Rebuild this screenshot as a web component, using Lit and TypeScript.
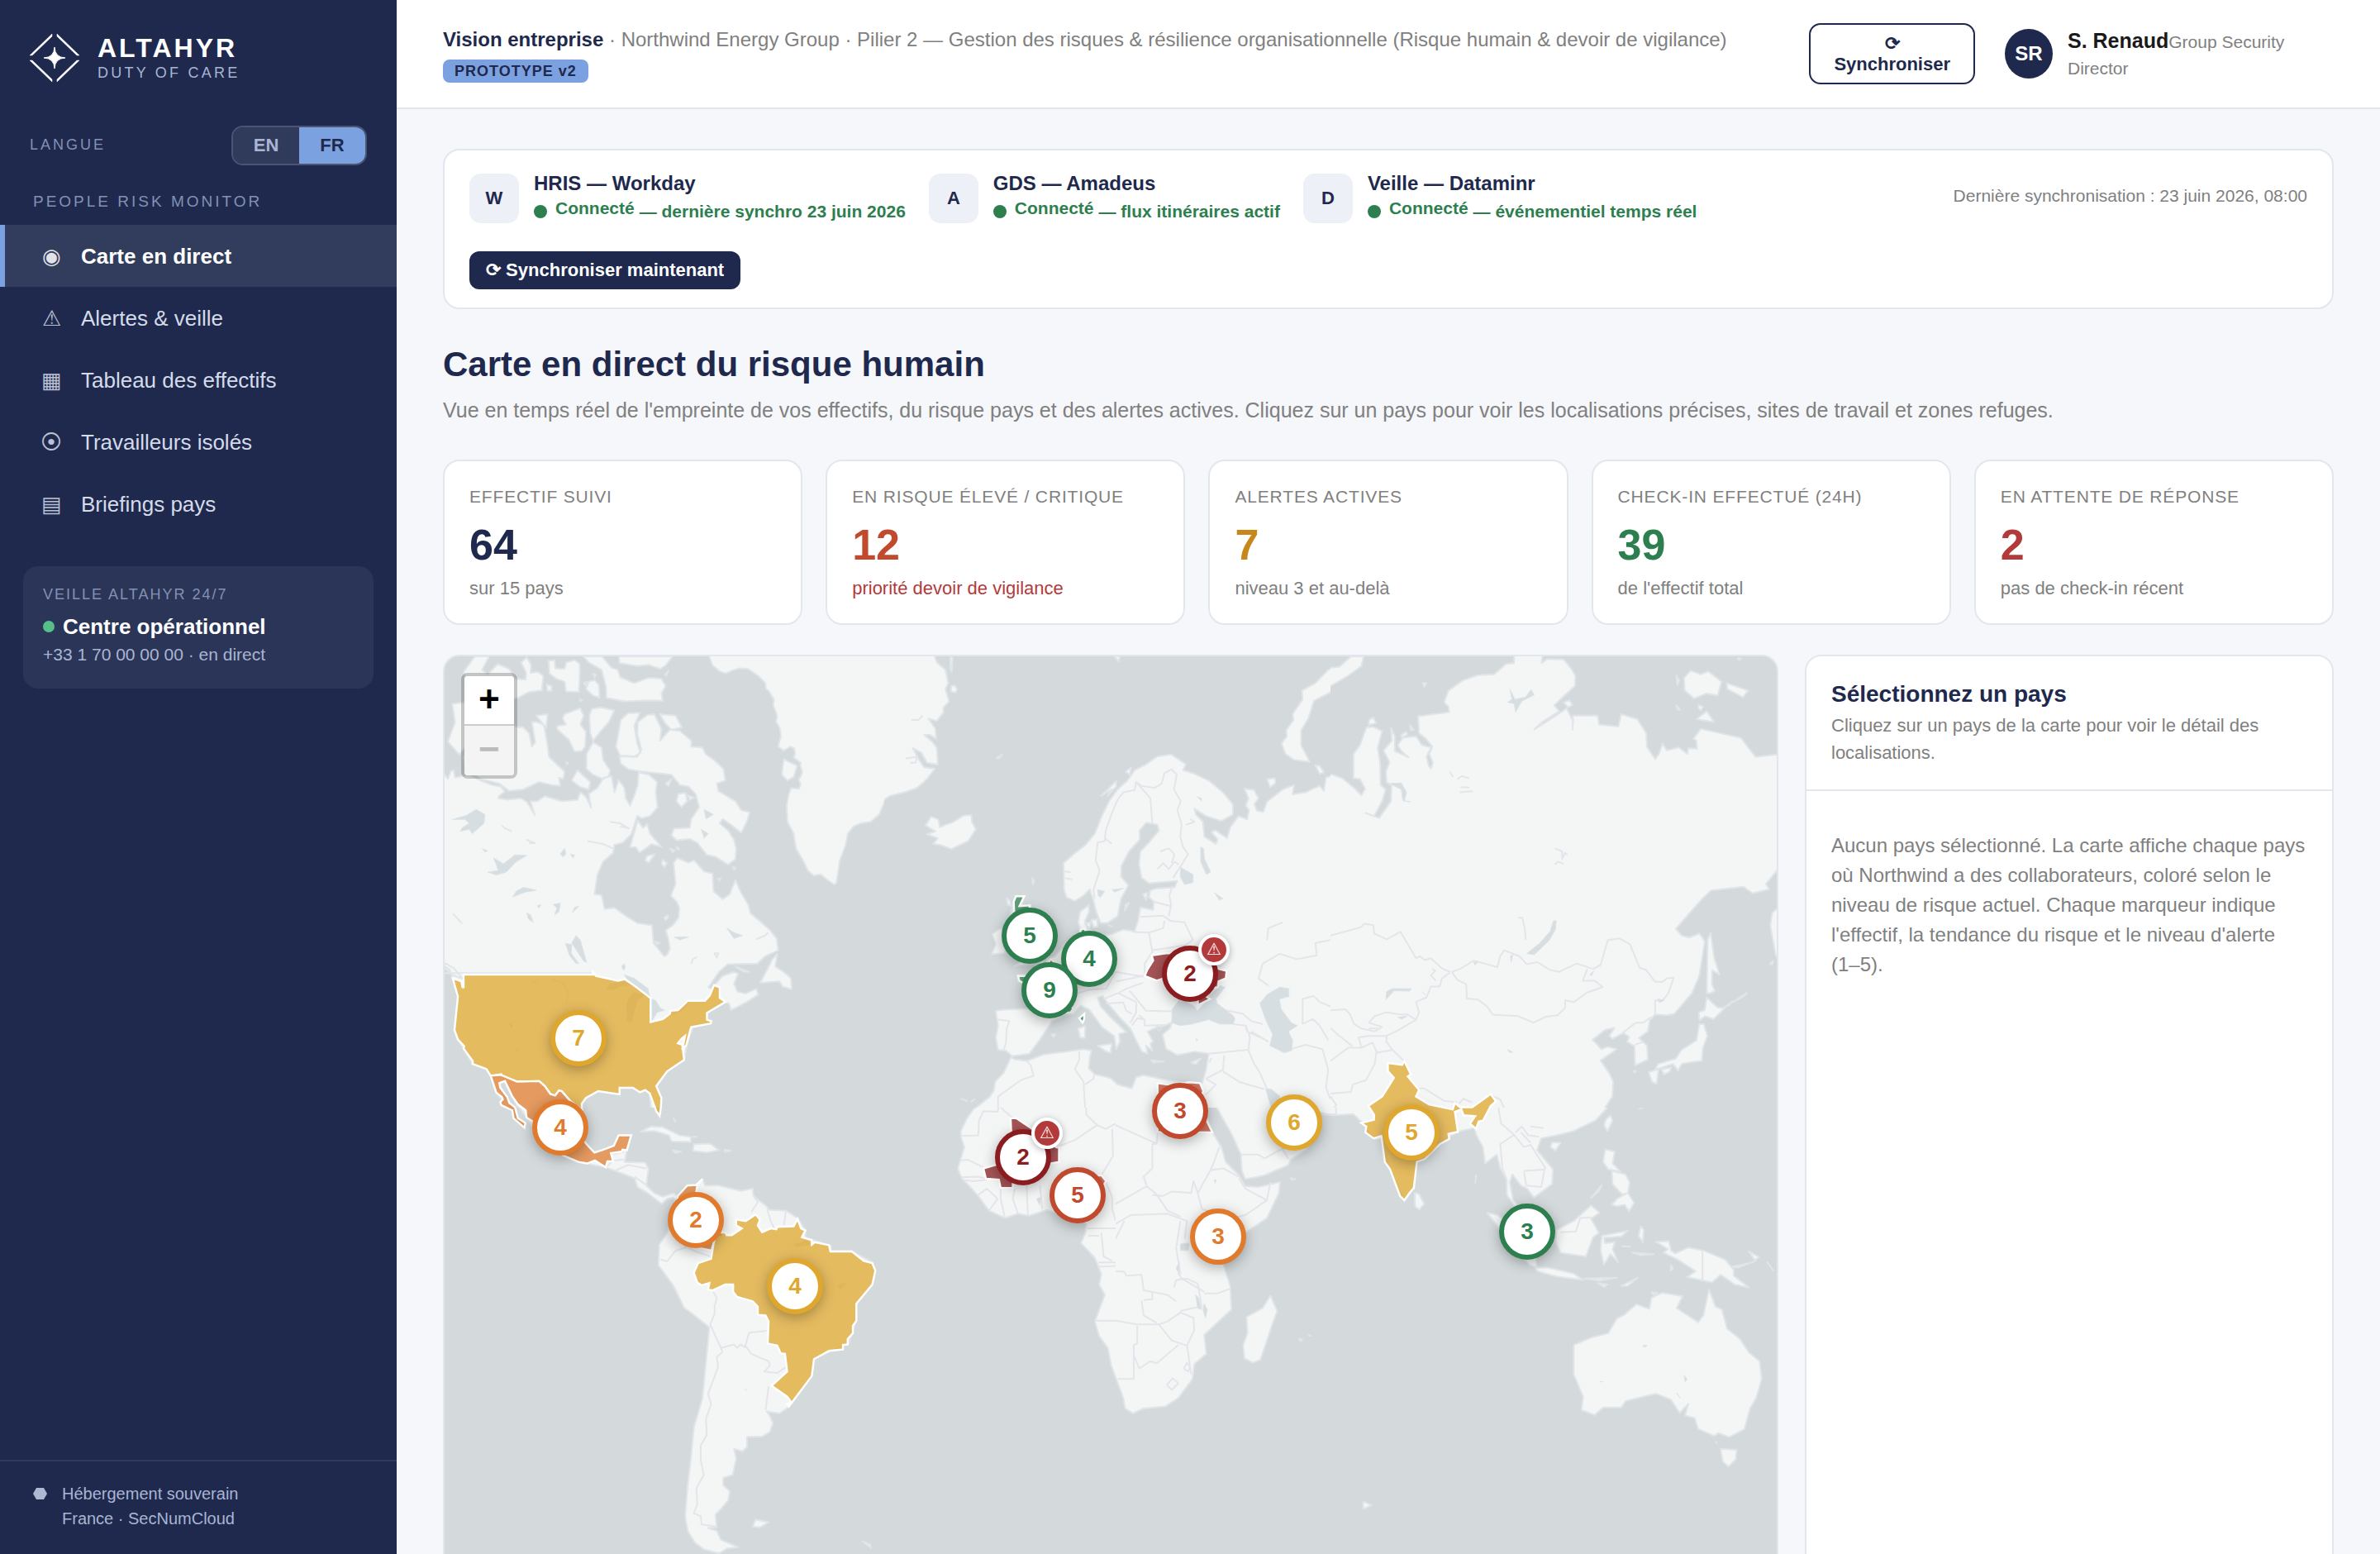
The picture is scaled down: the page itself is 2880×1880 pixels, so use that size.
import { LitElement, html, svg, css } from "lit";
import { customElement, state } from "lit/decorators.js";
import { classMap } from "lit/directives/class-map.js";
import { styleMap } from "lit/directives/style-map.js";

/* ------------------------------------------------------------------ */
/* Map data                                                            */
/* ------------------------------------------------------------------ */

/** Every tile is described on a square grid of this many units. */
const UNITS = 1568;

interface Tile {
  x: number;
  y: number;
  w: number;
  h: number;
  /** First grid row that is painted. */
  from: number;
  land: string[];
  water: string[];
  borders: string[];
}

const TILES: Tile[] = [
  {
    x: 530, y: 780, w: 540, h: 560, from: 0,
    land: [
      // Greenland, west
      "945,20 965,70 990,90 1010,97 1040,85 1060,80 1090,82 1125,105 1150,130 1152,148 1165,160 1180,185 1178,205 1192,240 1188,260 1202,285 1205,310 1195,345 1215,358 1240,345 1252,352 1255,370 1250,382 1275,400 1273,410 1280,430 1275,445 1268,455 1274,475 1268,488 1240,486 1232,510 1225,545 1228,600 1250,640 1258,690 1285,735 1300,765 1320,782 1345,778 1370,798 1392,812 1400,806 1405,775 1412,730 1432,680 1440,640 1460,615 1485,605 1520,600 1550,575 1570,530 1610,500 1610,20",
      "1215,388 1262,410 1250,448 1228,460 1208,440",
      // Canadian mainland and United States
      "-20,430 23,440 35,455 45,428 55,425 60,450 85,445 110,440 150,460 190,475 220,480 235,497 215,512 212,520 245,525 290,520 312,532 340,577 325,530 350,530 375,513 400,520 435,530 490,526 500,500 520,515 538,552 530,505 560,485 582,450 610,445 620,500 635,458 655,485 660,520 675,545 690,510 702,475 705,433 742,440 770,465 765,500 772,550 745,580 715,588 700,580 690,610 680,640 650,670 620,678 615,705 580,735 560,780 550,845 575,848 585,895 620,891 660,918 700,943 752,950 757,1010 795,1055 805,1050 815,1030 808,990 800,968 825,950 845,925 848,890 838,870 818,850 835,810 828,740 840,722 880,738 900,730 935,768 965,775 968,835 1000,862 1025,845 1045,797 1065,840 1090,880 1098,910 1130,935 1165,965 1190,995 1195,1035 1150,1055 1122,1080 1018,1082 990,1105 950,1160 960,1165 1000,1122 1040,1108 1055,1115 1040,1148 1052,1175 1080,1182 1118,1165 1126,1185 1085,1210 1030,1238 1022,1215 1008,1210 945,1247 945,1270 958,1280 895,1297 877,1345 865,1406 805,1445 767,1495 783,1535 779,1596 750,1600 744,1520 728,1508 710,1516 685,1501 638,1501 638,1523 563,1512 520,1535 505,1555 505,1620 310,1620 262,1530 235,1478 215,1485 250,1568 240,1620 228,1545 205,1517 185,1460 170,1437 122,1420 90,1368 70,1337 58,1305 70,1192 52,1130 40,1100 -20,1060",
      // Arctic archipelago
      "90,92 130,39 180,39 155,85 175,100 210,65 250,82 272,115 308,118 310,95 292,60 312,42 328,70 325,95 350,92 370,105 365,155 320,160 280,180 200,200 150,160 100,130",
      "50,200 130,190 150,240 110,330 75,372 35,328 60,262",
      "285,280 298,278 320,300 330,345 342,330 330,262 350,262 372,272 385,340 390,380 445,430 440,455 425,450 430,478 400,475 355,465 300,490 250,495 215,470 150,455 100,420 90,380 130,330 180,270 240,265",
      "388,55 410,52 412,80 445,82 450,60 480,52 498,65 498,110 495,160 450,158 445,125 415,115 392,98",
      "530,125 550,120 565,135 568,180 545,172 520,150",
      "510,39 575,39 610,78 632,85 640,110 690,130 740,112 785,115 800,140 785,165 790,190 740,188 655,192 592,180 590,140 575,85 530,60",
      "635,39 825,39 800,70 780,82 740,68 700,72 638,62",
      "445,235 500,215 512,240 500,270 520,295 517,345 505,360 480,362 460,322 418,285 420,275 450,270 438,250",
      "540,218 570,212 620,222 600,262 570,295 545,325 535,300 532,240",
      "345,240 385,235 380,282 362,260",
      "545,330 575,348 580,390 605,425 600,445 580,455 545,440 522,420 522,370",
      "490,425 535,465 530,490 500,482 470,460",
      "632,310 642,255 668,232 710,230 690,275 700,335 712,365 690,378 640,375 625,345",
      "702,262 735,238 760,235 785,285 780,325 815,288 850,292 890,325 890,345 930,348 940,370 975,395 1003,420 1010,460 980,470 985,495 1045,530 1065,560 1095,568 1085,600 1065,637 1030,610 1000,590 990,605 1020,630 1040,660 1048,690 1045,725 1020,745 975,718 945,712 912,672 885,658 838,662 820,645 830,622 885,620 890,590 918,550 905,505 880,480 850,475 820,440 790,437 720,430 670,422 642,402 638,378 700,380 715,355 700,300",
      "780,235 835,240 857,280 820,288 795,262",
      "845,505 870,502 876,530 855,550 838,530",
      "702,595 720,620 735,608 745,640 785,685 750,675 708,705 695,685 675,685",
      "735,715 762,710 740,738 728,730", "790,728 804,740 795,753 786,742",
      "1192,1048 1185,1090 1215,1108 1240,1130 1243,1167 1210,1158 1200,1140 1132,1145 1160,1095 1175,1065",
      "1045,1090 1092,1108 1070,1106", "23,1078 55,1095 88,1132 50,1118 23,1095", "795,925 808,915 808,925 800,933", "762,1005 780,1010 770,1015", "985,792 993,792 988,800", "1036,752 1046,757 1040,762",
      "815,690 832,696 825,703", "838,685 848,690 842,695", "878,510 900,518 885,525", "800,470 820,455 810,478", "498,185 506,188 500,192", "810,88 802,105 798,100", "545,98 554,102 550,112", "512,130 524,125 518,138", "382,135 400,140 398,157 384,155", "450,398 458,400 454,405",
    ],
    water: [
      "50,592 100,578 135,558 165,575 162,605 120,640 110,625 78,632 85,620 110,605 95,592", "175,770 212,765 205,745 195,722 230,742 270,712 312,714 275,735 240,770 205,780", "262,855 275,835 300,822 330,828 345,832 305,838", "485,985 500,1000 522,1075 512,1072 490,1040 470,1010", "448,1012 470,1015 468,1045 495,1080 485,1080 462,1052",
      "592,1167 605,1148 650,1140 685,1150 640,1158 612,1170", "688,1178 728,1185 700,1205 685,1255 680,1278 665,1275 664,1215 675,1190", "750,1200 765,1205 780,1230 797,1238 770,1245 750,1278", "655,1118 690,1130 738,1165 745,1195 705,1165 665,1135", "645,1090 655,1080 658,1095 652,1102", "935,558 968,575 942,590", "925,625 950,640 935,655", "430,708 445,690 450,710 438,718", "405,880 430,875 425,905 410,915 418,892", "155,690 175,698 165,702", "312,908 325,915 335,940 318,930", "830,990 880,990 850,1000", "1015,960 1040,975 1070,985 1040,995", "465,710 480,712 475,722", "348,885 362,880 355,892", "480,890 495,885 472,908", "248,1282 262,1290 258,1297", "815,1255 860,1232 880,1210 870,1230 845,1245",
    ],
    borders: ["20,1112 540,1112", "225,612 235,622 260,632", "605,600 640,605 670,622 640,615", "525,665 580,675 615,690", "310,660 340,672 320,672", "890,1080 895,1065 910,1058", "970,1045 985,1045 980,1060 970,1045", "1118,998 1150,985 1160,975", "52,910 85,945", "330,1145 350,1136", "400,1135 440,1145 455,1175 452,1215", "268,1380 285,1368"],
  },
  {
    x: 1070, y: 780, w: 540, h: 560, from: 0,
    land: [
      // Greenland, east
      "-40,20 170,20 185,60 215,85 225,130 215,150 228,192 208,212 208,230 185,258 155,250 180,285 182,318 160,305 140,305 170,330 185,350 188,405 150,400 130,365 100,350 122,390 140,415 178,420 150,455 115,485 70,500 20,512 0,525 -40,560",
      "232,40 240,45 237,92 232,80", "235,140 247,137 257,150 250,162 235,158", "395,384 414,372 404,385", "808,39 827,39 824,56",
      "145,612 165,582 190,592 195,618 220,608 240,602 260,590 280,578 307,577 308,600 322,625 295,665 235,692 205,680 172,675 188,655 150,642 180,632",
      // Eurasia and North Africa
      "630,740 665,710 705,680 740,640 765,580 790,530 820,490 855,460 880,425 920,405 960,378 1010,372 1060,405 1050,425 1090,437 1140,460 1190,500 1225,540 1225,575 1185,597 1130,580 1090,555 1095,575 1120,600 1125,650 1165,675 1172,660 1150,635 1162,628 1205,655 1215,620 1245,580 1275,592 1282,560 1270,545 1280,520 1265,487 1300,492 1315,520 1300,540 1310,562 1332,566 1345,532 1400,490 1440,475 1435,507 1480,500 1530,478 1545,495 1552,450 1620,430 1620,1620 300,1620 320,1570 370,1532 385,1510 390,1480 420,1450 445,1398 460,1405 500,1410 560,1388 640,1378 700,1370 728,1375 722,1400 718,1435 740,1455 795,1468 820,1490 870,1503 885,1465 910,1458 980,1472 1060,1485 1118,1485 1132,1435 1140,1385 1090,1378 1030,1390 990,1368 978,1320 1005,1298 1010,1280 985,1290 948,1300 925,1310 945,1345 935,1350 942,1375 920,1358 925,1385 905,1378 880,1330 865,1300 830,1265 790,1220 768,1190 750,1195 760,1225 795,1262 850,1312 825,1318 828,1345 815,1370 808,1325 765,1295 720,1235 690,1222 665,1250 635,1255 590,1275 545,1340 510,1385 450,1394 428,1375 400,1372 392,1330 400,1290 392,1240 420,1236 515,1232 522,1200 500,1150 470,1140 470,1120 510,1115 540,1075 570,1065 600,1055 630,1020 650,1000 692,975 682,940 688,905 718,882 720,905 705,935 715,962 770,985 800,980 840,965 880,970 892,935 900,890 945,898 948,870 930,855 935,832 960,825 1020,822 1030,800 930,808 905,790 895,745 900,700 930,670 965,630 960,610 920,603 897,630 898,660 860,700 833,750 832,785 858,815 832,860 820,920 785,942 760,942 745,905 735,865 722,828 700,850 670,868 640,855 632,830",
      "1620,60 1560,85 1515,130 1468,155 1470,185 1435,235 1438,255 1412,290 1415,310 1396,335 1410,370 1440,390 1495,397 1465,340 1465,290 1490,250 1510,190 1570,160 1620,130",
      "1345,455 1372,452 1375,468 1356,483", "1515,408 1530,410 1545,432 1530,438",
      "455,870 463,852 492,852 480,885 512,885 540,950 575,1000 595,1030 575,1060 560,1080 458,1088 485,1070 440,1040 430,960", "380,980 400,965 425,960 425,1045 378,1048 392,1015",
      "750,1358 800,1352 795,1382 780,1378", "682,1300 706,1292 705,1332 688,1330", "938,1408 982,1412 945,1415", "1078,1415 1112,1402 1095,1421", "705,945 725,940 722,962", "728,932 748,930 750,955 735,958", "848,880 860,875 845,900", "910,845 925,840 920,865", "588,1320 602,1320 595,1328", "790,950 800,955", "762,512 815,462 815,480 785,512 800,490", "848,430 868,415 862,440", "430,860 440,865 445,885 435,880", "520,790 527,800 522,812", "270,1538 290,1545", "305,1548 318,1540",
    ],
    water: [
      "1012,1235 1035,1205 1060,1208 1090,1225 1100,1240 1130,1210 1140,1190 1165,1200 1170,1215 1225,1255 1232,1268 1225,1285 1180,1285 1140,1270 1080,1285 1040,1290 1010,1280", "1140,1190 1180,1155 1198,1160 1165,1200",
      "1320,1215 1345,1185 1390,1160 1422,1165 1422,1192 1388,1200 1395,1235 1430,1280 1452,1290 1420,1310 1435,1340 1432,1375 1405,1382 1355,1358 1365,1320 1340,1270", "1042,755 1085,778 1085,805 1055,812 1040,785", "1112,685 1122,690 1125,725 1147,770 1132,778 1112,735", "1340,1505 1360,1505 1390,1530 1392,1600 1370,1600", "750,830 775,835 760,855 752,850", "800,830 840,825 810,838", "955,1292 978,1298 965,1310", "1160,840 1190,860 1178,865", "1095,1335 1102,1338 1098,1342", "1100,515 1115,520 1115,530",
    ],
    borders: [
      "740,860 735,830 757,765 743,730 750,670 775,665 778,630 800,570 820,525 840,500 880,492 885,465 905,478 950,485 975,470 985,435 1010,422 1028,440", "885,465 935,520 942,605", "1028,440 1018,490 1042,530 1030,560 1045,610 1040,650 1050,685 1068,710 1015,790", "900,922 980,918 1005,935 1055,940 1085,1000 1058,1018 940,1035", "1012,818 1002,850 1008,880 1000,920", "945,870 1005,885", "985,935 980,960 930,975", "870,972 930,975 942,1040 915,1080 915,1125", "650,1190 720,1168 780,1165 812,1108 870,1118 915,1125", "815,1140 870,1130 912,1120", "770,1200 822,1180 850,1165 910,1145", "780,1215 840,1212 850,1240 870,1250", "822,1180 860,1198 885,1210 885,1245 865,1280", "862,1172 895,1210 920,1240 1010,1242", "895,1255 915,1270 915,1290 985,1288", "870,1290 890,1265 915,1270", "400,1270 440,1275 430,1300 428,1345 420,1375", "1200,1238 1260,1250 1290,1275 1330,1285", "1225,1285 1270,1290 1275,1310 1320,1330", "1270,1290 1285,1330 1280,1372 1140,1385", "1290,1310 1350,1345", "1195,1390 1190,1440 1130,1470", "1142,1415 1150,1400", "1280,1375 1300,1420 1320,1450 1345,1505", "1190,1445 1250,1482 1335,1505", "1130,1525 1165,1490 1130,1470", "1470,1285 1470,1200 1508,1190 1530,1210 1568,1225", "1470,1285 1505,1268 1530,1290 1560,1340", "1435,1368 1480,1355 1540,1370 1560,1440 1552,1500 1568,1540", "1350,1155 1315,1130 1330,1080 1390,1047 1450,1065 1520,1052 1515,1010 1568,1000", "500,1410 515,1425 525,1460 480,1475 400,1530 400,1600", "685,1378 685,1405 670,1438 700,1480 708,1600", "738,1455 735,1470 705,1490", "95,255 120,255 135,240", "75,385 115,380 110,400 90,400", "775,655 800,675",
      "960,760 980,740 1000,760 1020,735 1035,745", "970,700 1000,690 1020,710 1010,740", "630,768 655,770", "635,790 660,795", "1345,1000 1350,960 1400,940", "1075,590 1090,600 1060,610",
    ],
  },
  {
    x: 1610, y: 780, w: 560, h: 560, from: 0,
    land: [
      "-40,430 0,438 40,452 80,485 105,510 117,488 100,455 78,452 78,370 100,340 122,280 145,278 175,292 160,350 168,400 170,475 187,490 175,530 148,580 118,570 165,587 205,530 207,478 190,465 188,430 200,398 180,358 208,325 205,282 218,310 218,360 265,382 240,360 228,340 245,315 290,310 310,340 342,348 325,378 332,408 340,420 347,400 335,370 345,345 320,315 300,300 297,242 350,235 402,228 400,210 385,195 400,155 450,120 500,103 555,100 595,65 622,62 622,20 720,20 715,62 735,48 790,50 815,80 830,105 828,140 800,165 758,205 775,225 720,260 690,287 765,240 800,215 822,260 820,240 905,240 910,270 975,277 985,235 1040,252 1070,300 1072,345 1100,388 1112,372 1125,335 1140,358 1180,348 1210,370 1212,350 1242,352 1240,325 1230,318 1255,285 1300,295 1390,315 1440,380 1530,370 1530,745 1475,810 1487,828 1430,842 1400,820 1290,832 1260,860 1170,962 1190,985 1215,992 1250,978 1268,1005 1250,1120 1225,1180 1165,1250 1140,1255 1100,1252 1082,1272 1075,1310 1045,1332 1073,1358 1075,1405 1032,1425 1030,1360 1005,1345 1012,1328 992,1315 955,1335 945,1325 962,1298 930,1305 888,1338 918,1370 940,1362 970,1370 915,1408 945,1452 958,1480 955,1530 930,1568 920,1620 -40,1620",
      "-40,100 0,78 30,75 70,39 112,39 105,72 60,105 0,140 -40,160",
      "1288,975 1300,1060 1318,1117 1293,1102 1292,1150 1302,1172 1288,1180 1275,1180 1278,1000", "1275,1195 1310,1228 1335,1232 1298,1268 1270,1258 1250,1272 1248,1245 1268,1238", "1250,1285 1265,1285 1277,1325 1262,1365 1258,1410 1215,1415 1190,1420 1178,1442 1160,1420 1100,1440 1110,1420 1170,1402 1190,1372 1240,1340", "1078,1448 1112,1438 1105,1487 1090,1482", "1122,1438 1155,1432 1150,1445 1130,1456",
      "1530,880 1497,908 1490,950 1508,1050 1530,1090", "1198,112 1220,88 1255,100 1280,90 1325,125 1312,172 1275,165 1232,182 1200,155", "1342,130 1415,155 1398,178 1345,150", "1240,252 1275,225 1300,262", "1247,203 1262,210 1255,222 1247,215", "130,255 145,246 155,265 130,272", "240,305 255,295 262,303 242,314", "270,272 282,288 272,290", "790,195 810,188 820,205 805,212", "313,130 325,130 318,143", "1172,105 1182,122 1175,136", "1172,205 1184,220 1176,220", "1380,45 1392,47 1384,52", "1488,1082 1500,1070 1498,1082", "1335,1228 1362,1208 1350,1222", "1365,1210 1410,1180 1398,1192", "1025,1444 1036,1444 1030,1449",
    ],
    water: ["765,935 762,965 740,1003 690,1050 665,1046 708,1012 745,970 755,935", "188,1202 190,1175 210,1165 275,1165 268,1173 215,1172", "608,150 625,185 660,178 680,152 690,170 650,190 640,205 627,228 622,200 600,195 615,185", "228,1262 260,1258 242,1268", "485,1075 498,1075 490,1085", "610,1055 618,1050 612,1075", "600,1372 618,1380 608,1382", "200,470 240,468 258,500 250,530 272,532 245,528 240,490", "310,1175 322,1187", "1110,1200 1130,1205 1115,1212", "878,1118 892,1105 885,1120"],
    borders: [
      "-20,990 0,985 100,958 115,945 145,950 148,978 190,998 237,972 290,1062 302,1055 320,1068 340,1062 380,1098 405,1108", "410,1108 440,1098 485,1070 565,1092 575,1055 588,1035 640,1055 665,1082 700,1075 745,1102 775,1108 835,1080 890,1098 915,1085 940,1000 980,995 1015,1015 1048,1095 1070,1102 1100,1142 1125,1142 1140,1130 1163,1128 1145,1180 1125,1205 1100,1205 1100,1255", "412,1110 430,1135 460,1150 462,1198 500,1202 530,1225 550,1253 635,1258 688,1280 730,1260 770,1255 795,1230 795,1205 825,1210 870,1178 922,1160 895,1138 855,1138 870,1098", "405,1110 378,1130 370,1158 340,1158 325,1195 290,1210 300,1245 290,1270", "290,1270 260,1252 235,1252 190,1245 150,1258 130,1280 175,1295 150,1310 105,1300 80,1285 65,1250 50,1235 -20,1240", "290,1270 230,1305 190,1325 130,1325 95,1330 105,1365 60,1365 0,1410", "190,1325 190,1345 212,1375 250,1410", "155,1382 150,1420 120,1475 75,1490 70,1515 -20,1522", "75,1360 30,1325 -20,1280", "105,1365 142,1348 158,1382 212,1372", "130,1300 160,1300", "300,1503 318,1503 385,1545 430,1550", "435,1555 450,1538 480,1550", "540,1525 575,1540 588,1568", "1085,1262 1060,1280 1035,1280 990,1315", "1032,1355 1058,1345", "-20,1600 20,1560 0,1530", "760,690 785,700 785,725 795,705 803,712", "760,745 770,735 790,742", "635,925 650,925 658,960 662,1000", "430,455 445,445 470,452", "438,500 482,496", "405,430 415,448", "345,1098 355,1105 340,1120 358,1138", "440,482 470,484", "822,245 820,290",
    ],
  },
  {
    x: 530, y: 1320, w: 820, h: 560, from: 56,
    land: [
      "120,-60 160,-60 240,0 340,-20 333,60 333,160 345,182 362,208 380,200 407,185 418,150 447,150 437,200 432,240 480,242 487,262 482,320 500,345 520,358 545,345 555,355 577,320 597,318 612,298 618,320 650,320 700,338 728,330 730,355 760,390 765,402 805,405 832,430 850,470 850,495 910,525 908,542 958,542 1005,580 1012,610 1005,655 968,720 968,775 950,855 870,905 865,965 812,1070 790,1092 760,1085 768,1100 775,1125 768,1155 750,1170 715,1172 715,1205 705,1220 685,1212 690,1245 682,1300 660,1310 660,1335 675,1355 672,1385 655,1415 642,1435 645,1478 625,1480 645,1490 655,1520 695,1545 668,1550 650,1566 615,1552 595,1530 578,1490 572,1440 578,1330 585,1250 592,1140 612,1040 628,800 585,750 570,735 545,660 510,590 512,520 530,480 545,420 555,380 545,362 530,365 518,382 485,345 462,325 455,295 388,258 325,240 255,190 205,90 172,18",
      "470,137 492,120 520,122 560,150 585,155 585,172 540,170 535,150 500,135", "592,180 630,178 650,200 622,208 590,202", "543,200 562,205 550,210", "663,198 678,202 665,206", "728,1475 735,1452 765,1460 745,1478", "982,1525 1000,1535 1002,1547", "545,92 550,105", "590,155 598,155",
      "1290,-20 1270,30 1240,60 1225,90 1210,135 1210,155 1218,190 1203,262 1212,295 1235,330 1250,355 1275,405 1312,430 1342,415 1368,422 1410,402 1440,420 1480,435 1500,450 1498,480 1488,515 1520,565 1535,620 1530,655 1543,690 1520,780 1530,830 1550,870 1558,930 1568,970 1620,1080 1620,-20",
      "1210,30 1215,35", "1222,35 1226,28",
    ],
    water: ["822,520 855,505 860,520 830,528", "925,655 945,650 930,672", "1385,365 1395,360 1392,385", "710,1010 714,1013"],
    borders: [
      "405,215 430,205", "388,258 405,235 430,232", "412,268 440,250 482,262", "455,290 482,318", "637,680 645,700 640,730 640,755 630,790 642,830 655,870", "655,870 685,858 692,870 700,858 710,868 720,818 760,812", "710,860 725,890 765,915 768,930 755,950 785,955 805,935", "655,870 658,885 645,900 648,935 638,975 625,1025 632,1060 620,1110 622,1165 608,1200 608,1250 615,1300 598,1345 600,1400 592,1430 608,1440 610,1468 645,1475", "765,1000 758,1080", "515,570 530,577 550,540 585,525", "570,525 600,545 630,560", "730,355 740,375 725,410", "762,402 770,440 778,465", "805,405 800,460",
      "1298,-20 1298,50 1295,70 1262,68 1252,100 1250,150 1210,152", "1298,50 1330,92", "1500,-20 1500,80 1525,115 1475,165 1440,185", "1525,115 1545,128 1568,110", "1560,128 1562,220 1535,285", "1210,235 1225,232 1262,258", "1212,292 1250,290 1268,297", "1212,300 1240,305 1270,300", "1250,352 1270,330 1295,365 1275,405", "1302,328 1302,365 1312,430", "1335,330 1330,365 1342,415", "1362,320 1365,420", "1393,320 1398,400", "1500,465 1568,465", "1545,305 1560,360 1560,400 1568,440", "1528,595 1568,592", "1528,580 1568,580", "1520,778 1568,778", "1535,480 1540,560 1560,575", "1505,490 1530,490",
    ],
  },
  {
    x: 1350, y: 1320, w: 820, h: 560, from: 56,
    land: [
      // Africa
      "-40,-20 205,-20 205,60 222,135 245,190 255,240 285,285 300,322 330,325 380,308 378,345 350,430 300,480 260,540 250,590 265,660 268,740 205,825 210,890 182,925 178,975 145,1040 115,1068 65,1075 40,1092 22,1075 18,1040 0,970 -40,800",
      // Arabia
      "225,-20 228,40 270,150 290,215 292,270 300,298 345,285 400,250 405,232 440,200 455,170 450,140 420,110 390,80 355,30 345,-20",
      // South and East Asia
      "372,-20 390,20 440,60 500,82 550,78 570,105 598,160 615,160 635,265 668,370 690,330 695,245 745,180 790,138 830,125 835,150 850,190 855,245 882,215 890,260 905,300 905,350 922,388 950,440 940,400 920,370 912,310 918,282 938,320 952,330 968,360 1010,315 1012,265 975,200 985,160 1020,150 1060,135 1110,100 1145,45 1150,-20",
      "358,693 374,745 365,780 335,910 318,920 298,905 295,860 305,820 303,765 340,735", "1010,173 1030,175 1018,202 1006,190", "1135,95 1145,82 1150,100 1138,135 1130,115", "692,345 702,348 714,382 702,402 693,390", "1133,197 1155,205 1150,245 1168,272 1140,265 1128,240", "1148,385 1160,365 1185,345 1200,378 1188,407 1178,385 1160,390", "1148,270 1180,282 1190,310 1185,345 1172,350 1150,315", "1100,362 1125,318 1118,340",
      "1020,470 1060,440 1100,387 1120,412 1100,432 1118,480 1105,495 1088,560 1030,548 1018,510", "860,412 885,420 950,510 972,560 975,598 958,590 910,510", "970,597 1000,598 1060,618 1082,640 1020,628 975,610", "1125,490 1185,473 1170,492 1130,497 1132,515 1155,512 1150,535 1163,580 1145,552 1130,588 1122,540", "1085,635 1160,632 1120,642", "1170,660 1208,632 1185,660", "1115,650 1138,655 1130,663", "1215,458 1222,470 1220,512 1210,490", "1195,547 1245,552 1215,556", "1172,525 1190,527", "1285,590 1290,600 1284,608", "1250,510 1280,508 1285,540 1295,550 1325,530 1360,540 1410,570 1430,605 1430,625 1465,665 1432,655 1400,622 1380,648 1322,630 1342,610 1300,570 1268,548 1278,535", "1427,595 1475,580 1488,562 1465,542 1480,575 1440,598", "1508,580 1522,608",
      // Australia
      "1060,860 1100,835 1140,820 1160,770 1175,760 1205,722 1235,738 1240,700 1265,683 1312,695 1298,735 1348,783 1360,760 1373,672 1388,730 1403,740 1415,805 1445,840 1465,885 1490,915 1495,975 1482,1040 1468,1075 1455,1145 1420,1172 1395,1158 1385,1168 1348,1145 1340,1108 1318,1098 1325,1060 1305,1090 1285,1045 1250,1025 1180,1050 1170,1072 1128,1072 1108,1097 1078,1080 1082,1035 1060,960",
      "1400,1212 1437,1215 1435,1248 1418,1272 1405,1255", "573,1390 592,1403 573,1415", "425,838 432,842 428,847", "447,826 453,830", "405,295 416,298 408,300", "1240,682 1254,683 1245,690", "1388,1188 1392,1192", "834,285 832,312", "1212,60 1220,55",
    ],
    water: ["1315,962 1322,975 1318,985", "1220,862 1230,862 1223,868", "1298,1022 1306,1040", "185,690 192,700 198,740 190,735", "205,720 212,740 208,768 202,740", "140,600 148,580 145,620 152,632", "150,518 170,515 168,540 150,540", "228,300 233,302 230,312", "1120,985 1128,984"],
    borders: [
      "0,115 95,178 97,140", "95,178 85,180 85,262 65,290 72,322 0,382", "72,322 95,350 120,405 150,425", "85,352 110,355 130,340 175,345 180,305 190,345 215,280 225,250 240,190", "218,268 250,262 285,290", "285,295 300,330 350,370 300,420 270,430 200,400 190,345", "350,370 358,310", "0,450 35,420 120,415", "120,415 165,440 160,500", "0,500 20,440", "0,610 20,612 25,625 60,622 65,675 120,690 140,712", "150,632 205,680", "205,685 235,685 265,670", "135,665 140,640 165,635 190,652 200,735", "60,710 65,760 95,785", "65,708 85,705 85,680", "0,778 50,790 100,790 120,780 150,750 180,768 182,810 165,862 130,845 100,790", "50,795 50,855 42,860 42,975 5,975", "42,895 55,940 80,915 95,922 145,860", "165,860 175,960", "165,920 172,935 168,950 158,940 165,920", "118,995 132,973 145,990 130,1012 118,995", "150,745 200,728", "292,215 330,215 345,228 385,195 410,190", "385,195 400,230", "480,80 510,78 510,40 495,0", "885,50 892,110 922,148 890,180 895,262", "922,148 945,190 960,182 995,262", "945,270 995,265", "925,140 940,120 955,150 980,155", "938,140 960,175", "895,262 905,300", "945,272 950,320 985,325 992,270", "960,120 990,125", "1358,538 1358,645", "1030,478 1065,475 1075,430 1100,428", "150,440 140,530 150,620",
    ],
  },
];

interface Region {
  tile: number;
  color: string;
  rings: string[];
}

const AMBER = "#e0a72e";
const ORANGE = "#e07b2e";
const RUST = "#c1492e";
const MAROON = "#8b1d20";
const GREEN = "#2e7f4f";

const REGIONS: Region[] = [
  { tile: 0, color: AMBER, rings: ["90,1117 545,1117 545,1110 555,1122 632,1138 657,1133 700,1162 747,1197 747,1278 790,1268 815,1250 817,1240 843,1238 878,1206 938,1206 955,1188 970,1153 990,1160 990,1196 1010,1210 945,1247 945,1270 960,1275 958,1283 890,1295 885,1310 873,1355 858,1372 868,1325 855,1335 843,1350 858,1355 865,1406 805,1445 767,1495 785,1535 783,1570 779,1596 767,1580 744,1520 728,1508 710,1516 685,1501 638,1501 638,1523 563,1512 520,1535 505,1555 506,1580 465,1545 435,1512 425,1510 412,1527 395,1522 375,1495 355,1478 278,1480 222,1460 222,1455 185,1460 170,1437 122,1420 122,1410 90,1368 92,1360 70,1337 58,1305 70,1192 52,1130 82,1140 86,1160 90,1160"] },
  { tile: 3, color: ORANGE, rings: ["122,-52 146,-55 183,-32 234,-34 247,-17 260,10 271,15 280,-2 286,0 306,33 333,63 330,110 333,160 345,182 362,208 380,200 407,185 418,150 447,150 437,200 427,198 425,205 400,210 405,237 392,238 388,258 363,235 345,245 325,240 290,218 255,190 235,160 228,110 205,90 203,65 185,45 172,18 155,-34 142,-27 144,-12 160,20 165,40 178,55 185,92 202,108 200,124 175,92 172,65 147,48 144,38 150,28 148,20 135,5"] },
  { tile: 3, color: ORANGE, rings: ["612,298 597,318 577,320 555,355 555,400 545,440 560,500 600,530 633,540 640,500 660,490 650,430 620,400 597,345 600,320"] },
  { tile: 3, color: AMBER, rings: ["690,435 712,440 735,418 745,435 740,455 750,478 770,465 783,468 785,460 823,458 832,433 840,465 850,472 842,495 865,505 865,520 872,512 905,522 908,543 957,543 985,575 1005,583 1012,608 1005,655 968,720 968,778 960,795 960,820 948,840 948,858 937,860 937,875 905,880 870,908 865,965 812,1068 808,1060 818,1055 808,1035 772,998 808,950 803,890 793,888 785,862 763,855 765,780 758,760 740,758 740,730 728,712 692,697 683,680 683,655 665,655 635,675 625,672 628,650 610,658 600,648 592,615 602,583 632,568 638,515 645,480 665,478 668,488 680,488 703,465 690,455"] },
  { tile: 3, color: MAROON, rings: ["1325,92 1338,92 1375,128 1430,190 1437,192 1437,240 1400,250 1350,260 1330,310 1330,328 1302,328 1298,300 1268,297 1262,262 1290,250 1330,245"] },
  { tile: 3, color: RUST, rings: ["1450,300 1535,285 1546,305 1535,330 1500,400 1480,420 1440,400"] },
  { tile: 1, color: GREEN, rings: ["463,852 492,852 475,885 512,883 508,905 540,950 560,1060 470,1060 480,1000 458,930 455,870", "470,1122 505,1122 540,1110 545,1095 575,1080 585,1065 610,1085 650,1110 650,1200 663,1235 655,1245 600,1250 540,1235 520,1200 515,1160 475,1138", "685,1265 703,1250 702,1270 697,1280", "690,965 705,962 708,975 740,975 790,1000 800,1060 760,1150 690,1150 650,1100 660,1010 690,990"] },
  { tile: 1, color: MAROON, rings: ["940,1052 990,1045 1040,1045 1120,1050 1175,1098 1203,1105 1200,1130 1175,1140 1172,1160 1135,1165 1120,1185 1145,1200 1102,1220 1102,1200 1060,1190 1020,1150 995,1125 958,1138 915,1122 925,1100 945,1070"] },
  { tile: 4, color: RUST, rings: ["97,-27 130,-20 170,-30 195,-27 203,0 195,25 200,70 224,140 97,138 97,-10"] },
  { tile: 4, color: AMBER, rings: ["630,-95 663,-89 668,-102 683,-57 676,-50 702,-4 695,18 725,45 780,62 785,40 797,55 825,55 868,10 880,35 868,50 850,100 840,103 834,128 820,110 832,85 805,82 800,62 785,70 792,138 770,145 772,162 750,180 715,230 697,240 690,328 680,345 668,370 658,355 635,265 623,240 615,152 597,160 578,140 580,120 568,108 598,97 598,80 585,50 617,18 644,-45 630,-68"] },
];

interface Pin {
  country: string;
  count: number;
  x: number;
  y: number;
  color: string;
  alert?: boolean;
}

/** Marker centres, in pixels from the middle of the map. */
const PINS: Pin[] = [
  { country: "Royaume-Uni", count: 5, x: -98, y: -262, color: GREEN },
  { country: "Allemagne", count: 4, x: -26, y: -234, color: GREEN },
  { country: "Ukraine", count: 2, x: 96, y: -216, color: MAROON, alert: true },
  { country: "France", count: 9, x: -74, y: -196, color: GREEN },
  { country: "États-Unis", count: 7, x: -644, y: -138, color: AMBER },
  { country: "Égypte", count: 3, x: 84, y: -50, color: RUST },
  { country: "Émirats arabes unis", count: 6, x: 222, y: -36, color: AMBER },
  { country: "Mexique", count: 4, x: -666, y: -30, color: ORANGE },
  { country: "Inde", count: 5, x: 364, y: -24, color: AMBER },
  { country: "Mali", count: 2, x: -106, y: 6, color: MAROON, alert: true },
  { country: "Nigeria", count: 5, x: -40, y: 52, color: RUST },
  { country: "Colombie", count: 2, x: -502, y: 82, color: ORANGE },
  { country: "Singapour", count: 3, x: 504, y: 96, color: GREEN },
  { country: "Kenya", count: 3, x: 130, y: 102, color: ORANGE },
  { country: "Brésil", count: 4, x: -382, y: 162, color: AMBER },
];

const toPath = (rings: string[], close = true) =>
  rings.map((r) => `M${r.split(" ").join("L")}${close ? "Z" : ""}`).join("");

const toGrid = (t: Tile) =>
  `translate(${t.x} ${t.y}) scale(${t.w / UNITS} ${t.h / UNITS})`;

@customElement("world-map")
export class WorldMap extends LitElement {
  static styles = css`
    :host {
      display: block;
      position: relative;
      overflow: hidden;
      height: 1200px;
      background: #d4dadc;
      border: 2px solid #e2e7ee;
      border-radius: 20px;
    }
    .pane {
      position: absolute;
      left: 50%;
      top: 50%;
    }
    .base {
      position: absolute;
      left: -806px;
      top: -600px;
      width: 1632px;
      height: 1200px;
    }
    .land {
      fill: #f4f6f5;
      stroke: #dfe5e9;
      stroke-width: 2;
      stroke-linejoin: round;
      vector-effect: non-scaling-stroke;
    }
    .water {
      fill: #d7dee1;
      stroke: #dde4e8;
      stroke-width: 1;
      vector-effect: non-scaling-stroke;
    }
    .border {
      fill: none;
      stroke: #e5e4ea;
      stroke-width: 2;
      stroke-linejoin: round;
      vector-effect: non-scaling-stroke;
    }
    .region {
      fill-opacity: 0.75;
      stroke: #ffffff;
      stroke-width: 2.4;
      stroke-linejoin: miter;
      vector-effect: non-scaling-stroke;
    }
    .pin {
      position: absolute;
      width: 68px;
      height: 68px;
      transform: translate(-50%, -50%);
    }
    .count {
      box-sizing: border-box;
      width: 68px;
      height: 68px;
      padding: 0;
      border: 6px solid currentColor;
      border-radius: 50%;
      background: #ffffff;
      font: bold 28px/56px "Liberation Sans", Arial, sans-serif;
      box-shadow: 0 4px 16px rgba(0, 0, 0, 0.3);
      cursor: pointer;
    }
    .warn {
      position: absolute;
      box-sizing: border-box;
      top: -14px;
      right: -14px;
      width: 38px;
      height: 38px;
      border: 4px solid #ffffff;
      border-radius: 50%;
      background: #b33a3a;
      color: #ffffff;
      font: 20px/28px "Liberation Sans", Arial, sans-serif;
      text-align: center;
      box-shadow: 0 2px 8px rgba(0, 0, 0, 0.3);
    }
    .zoom {
      position: absolute;
      left: 20px;
      top: 20px;
      display: grid;
      border: 4px solid rgba(0, 0, 0, 0.2);
      border-radius: 8px;
      background-clip: padding-box;
    }
    .step {
      box-sizing: border-box;
      width: 60px;
      height: 60px;
      padding: 2px 0 0;
      border: 0;
      background: #ffffff;
      color: #000000;
      font: bold 44px/50px "Liberation Mono", monospace;
      text-align: center;
    }
    .step.in {
      padding-top: 4px;
      border-bottom: 2px solid #cccccc;
      border-radius: 4px 4px 0 0;
    }
    .step.out {
      border-radius: 0 0 4px 4px;
    }
    .step:disabled {
      background: #f4f4f4;
      color: #bbbbbb;
    }
  `;

  render() {
    return html`
      <div class="pane">
        <svg class="base" viewBox="538 794 1632 1200" aria-hidden="true">
          ${TILES.map(
            (t, i) => svg`
              <clipPath id="tile-${i}">
                <rect x=${t.x} y=${t.y + Math.round((t.from * t.h) / UNITS)} width=${t.w} height=${t.h}></rect>
              </clipPath>
              <g clip-path="url(#tile-${i})">
                <g transform=${toGrid(t)}>
                  <path class="land" d=${toPath(t.land)}></path>
                  <path class="border" d=${toPath(t.borders, false)}></path>
                  <path class="water" d=${toPath(t.water)}></path>
                </g>
              </g>`
          )}
          ${REGIONS.map(
            (r) => svg`
              <g transform=${toGrid(TILES[r.tile])}>
                <path class="region" fill=${r.color} d=${toPath(r.rings)}></path>
              </g>`
          )}
        </svg>
        ${PINS.map(
          (p) => html`
            <div class="pin" style=${styleMap({ left: `${p.x}px`, top: `${p.y}px` })}>
              <button class="count" style=${styleMap({ color: p.color })} aria-label=${p.country}>${p.count}</button>
              ${p.alert ? html`<span class="warn">⚠</span>` : ""}
            </div>
          `
        )}
      </div>
      <div class="zoom">
        <button class="step in" aria-label="Zoom avant">+</button>
        <button class="step out" aria-label="Zoom arrière" disabled>−</button>
      </div>
    `;
  }
}

/* ------------------------------------------------------------------ */
/* Page                                                                */
/* ------------------------------------------------------------------ */

const NAV = [
  ["◉", "Carte en direct"],
  ["⚠", "Alertes & veille"],
  ["▦", "Tableau des effectifs"],
  ["⦿", "Travailleurs isolés"],
  ["▤", "Briefings pays"],
];

const SOURCES = [
  { letter: "W", name: "HRIS — Workday", note: "— dernière synchro 23 juin 2026" },
  { letter: "A", name: "GDS — Amadeus", note: "— flux itinéraires actif" },
  { letter: "D", name: "Veille — Dataminr", note: "— événementiel temps réel" },
];

const KPIS = [
  { label: "EFFECTIF SUIVI", value: "64", note: "sur 15 pays", tone: "navy" },
  { label: "EN RISQUE ÉLEVÉ / CRITIQUE", value: "12", note: "priorité devoir de vigilance", tone: "rust", urgent: true },
  { label: "ALERTES ACTIVES", value: "7", note: "niveau 3 et au-delà", tone: "amber" },
  { label: "CHECK-IN EFFECTUÉ (24H)", value: "39", note: "de l'effectif total", tone: "green" },
  { label: "EN ATTENTE DE RÉPONSE", value: "2", note: "pas de check-in récent", tone: "red" },
];

@customElement("app-root")
export class AppRoot extends LitElement {
  @state() private lang = "FR";
  @state() private page = 0;

  static styles = css`
    :host {
      display: grid;
      grid-template-columns: 480px minmax(0, 1fr);
      height: 100vh;
      background: #f5f7fb;
      color: #1a1a1a;
      font: 24px/36px "Liberation Sans", Arial, sans-serif;
    }
    button {
      font-family: inherit;
      cursor: pointer;
    }
    h1, h2, p {
      margin: 0;
    }

    /* Sidebar */
    .side {
      display: flex;
      flex-direction: column;
      background: #1e294d;
      color: #d5dbe9;
    }
    .brand {
      display: flex;
      align-items: center;
      gap: 22px;
      padding: 40px 36px 0;
    }
    .mark {
      width: 60px;
      height: 60px;
      flex: none;
    }
    .word {
      color: #ffffff;
      font-size: 32px;
      line-height: 36px;
      font-weight: bold;
      letter-spacing: 3px;
    }
    .tag {
      color: #a9b5d3;
      font-size: 18px;
      line-height: 24px;
      letter-spacing: 0.18em;
    }
    .lang {
      display: flex;
      align-items: center;
      justify-content: space-between;
      padding: 52px 36px 0;
    }
    .caps {
      color: #8391b5;
      font-size: 18px;
      line-height: 24px;
      letter-spacing: 3px;
    }
    .lang .caps {
      padding-bottom: 2px;
    }
    .caps.tight {
      letter-spacing: 2px;
    }
    .caps.section {
      padding: 32px 40px 16px;
      font-size: 19px;
    }
    .switch {
      display: flex;
      overflow: hidden;
      border: 2px solid #4b5573;
      border-radius: 14px;
    }
    .opt {
      width: 80px;
      height: 44px;
      padding: 0;
      border: 0;
      background: #303a5b;
      color: #a9b5d3;
      font-size: 22px;
      font-weight: bold;
    }
    .opt.on {
      background: #7ca1e0;
      color: #1e294d;
    }
    .nav {
      display: flex;
      flex-direction: column;
    }
    .item {
      display: flex;
      align-items: center;
      gap: 20px;
      height: 75px;
      padding: 0 40px;
      border-left: 6px solid transparent;
      color: #d5dbe9;
      font-size: 26px;
      text-decoration: none;
    }
    .item.on {
      background: #323c5c;
      border-left-color: #7ca1e0;
      color: #ffffff;
      font-weight: bold;
    }
    .glyph {
      width: 32px;
      text-align: center;
      font-weight: normal;
      font-size: 26px;
      opacity: 0.85;
      flex: none;
    }
    .watch {
      margin: 38px 28px 0;
      padding: 22px 24px;
      background: #2b3557;
      border-radius: 18px;
    }
    .ops {
      display: flex;
      align-items: center;
      gap: 10px;
      padding-top: 6px;
      color: #ffffff;
      font-size: 26px;
      line-height: 42px;
      font-weight: bold;
    }
    .dot {
      width: 14px;
      height: 14px;
      border-radius: 50%;
      background: #57c08a;
      flex: none;
    }
    .phone {
      color: #a9b5d3;
      font-size: 21px;
      line-height: 26px;
      padding-bottom: 6px;
    }
    .host {
      display: flex;
      gap: 18px;
      margin-top: auto;
      padding: 24px 40px 28px;
      border-top: 2px solid #2f3a5e;
      color: #a9b5d3;
      font-size: 20px;
      line-height: 30px;
    }
    .hex {
      width: 17px;
      height: 30px;
      flex: none;
      fill: #adb8d3;
    }

    /* Header */
    .main {
      overflow-y: auto;
      scrollbar-width: none;
    }
    .top {
      display: flex;
      align-items: center;
      box-sizing: border-box;
      min-height: 132px;
      padding: 0 56px;
      background: #ffffff;
      border-bottom: 2px solid #e2e7ee;
    }
    .crumb {
      flex: 1;
      min-width: 0;
      padding: 2px 56px 0 0;
      color: #808080;
    }
    .strong {
      color: #1e294d;
      font-weight: bold;
    }
    .badge {
      display: inline-block;
      padding: 0 14px;
      border-radius: 8px;
      background: #7ca1e0;
      color: #1e294d;
      font-size: 18px;
      line-height: 28px;
      font-weight: bold;
      letter-spacing: 1px;
    }
    .resync {
      display: grid;
      justify-items: center;
      padding: 10px 28px;
      margin-right: 36px;
      border: 2px solid #1e294d;
      border-radius: 14px;
      background: #ffffff;
      color: #1e294d;
      font-size: 22px;
      line-height: 25px;
      font-weight: bold;
    }
    .avatar {
      display: grid;
      place-items: center;
      width: 58px;
      height: 60px;
      margin-right: 18px;
      border-radius: 50%;
      background: #1e294d;
      color: #ffffff;
      font-weight: bold;
    }
    .who {
      width: 322px;
      padding-top: 2px;
      color: #808080;
      font-size: 21px;
      line-height: 32px;
    }
    .name {
      color: #1a1a1a;
      font-size: 25px;
      font-weight: bold;
    }

    /* Content */
    .body {
      padding: 48px 56px;
    }
    .card {
      box-sizing: border-box;
      background: #ffffff;
      border: 2px solid #e2e7ee;
      border-radius: 20px;
    }
    .feeds {
      display: flex;
      flex-wrap: wrap;
      align-items: center;
      gap: 28px;
      padding: 22px 30px;
      color: #808080;
      font-size: 21px;
    }
    .feed {
      display: flex;
      align-items: center;
      gap: 18px;
      height: 72px;
    }
    .letter {
      display: grid;
      place-items: center;
      width: 60px;
      height: 60px;
      border-radius: 14px;
      background: #edf0f6;
      color: #1e294d;
      font-size: 22px;
      font-weight: bold;
    }
    .info {
      padding-bottom: 4px;
    }
    .title {
      color: #1e294d;
      font-size: 24px;
      line-height: 36px;
      font-weight: bold;
    }
    .state {
      display: flex;
      color: #2e7f4f;
      line-height: 32px;
      font-weight: bold;
    }
    .live {
      display: flex;
      align-items: center;
      gap: 10px;
      line-height: 24px;
      height: 24px;
      padding-right: 6px;
    }
    .live::before {
      content: "";
      width: 16px;
      height: 16px;
      margin-top: 8px;
      border-radius: 50%;
      background: #2e7f4f;
    }
    .last {
      margin-left: auto;
      padding-bottom: 6px;
    }
    .now {
      height: 46px;
      padding: 0 20px;
      border: 0;
      border-radius: 12px;
      background: #1e294d;
      color: #ffffff;
      font-size: 22px;
      font-weight: bold;
    }
    .h1 {
      margin-top: 42px;
      color: #1e294d;
      font-size: 42px;
      line-height: 50px;
    }
    .lead {
      margin: 10px 0 40px;
      color: #808080;
      font-size: 25px;
      line-height: 40px;
    }
    .kpis {
      display: grid;
      grid-template-columns: repeat(5, minmax(0, 1fr));
      gap: 28px;
      margin-bottom: 36px;
    }
    .kpi {
      padding: 27px 30px 25px;
      color: #808080;
    }
    .label {
      font-size: 21px;
      line-height: 32px;
      letter-spacing: 0.04em;
    }
    .value {
      margin: 12px 0 6px;
      font-size: 52px;
      line-height: 60px;
      font-weight: bold;
    }
    .note {
      font-size: 22px;
      line-height: 34px;
    }
    .note.urgent, .value.red { color: #b33a3a; }
    .value.navy { color: #1e294d; }
    .value.rust { color: #c1492e; }
    .value.amber { color: #c8871b; }
    .value.green { color: #2e7f4f; }
    .split {
      display: grid;
      grid-template-columns: minmax(0, 1fr) 640px;
      gap: 32px;
    }
    .head {
      padding: 25px 30px 28px;
      border-bottom: 2px solid #e2e7ee;
      color: #808080;
      font-size: 22px;
      line-height: 33px;
    }
    .h2 {
      color: #1e294d;
      font-size: 28px;
      line-height: 42px;
    }
    .empty {
      padding: 48px 30px;
      color: #808080;
    }
  `;

  render() {
    return html`
      <aside class="side">
        <div class="brand">
          <svg class="mark" viewBox="0 0 60 60" aria-hidden="true">
            <path d="M27 1V4L3 27H0ZM33 1V4L57 27H60ZM27 59V56L3 33H0ZM33 59V56L57 33H60Z" fill="#ffffff" stroke="#ffffff" stroke-width=".5"></path>
            <path d="M30 17Q30.500 29.500 43 30Q30.500 30.500 30 43Q29.500 30.500 17 30Q29.500 29.500 30 17Z" fill="#ffffff" stroke="#ffffff" stroke-width="1"></path>
          </svg>
          <div>
            <div class="word">ALTAHYR</div>
            <div class="tag">DUTY OF CARE</div>
          </div>
        </div>
        <div class="lang">
          <span class="caps">LANGUE</span>
          <div class="switch">
            ${["EN", "FR"].map(
              (l) => html`<button class=${classMap({ opt: true, on: this.lang === l })} @click=${() => (this.lang = l)}>${l}</button>`
            )}
          </div>
        </div>
        <div class="caps section">PEOPLE RISK MONITOR</div>
        <nav class="nav">
          ${NAV.map(
            ([icon, text], i) => html`
              <a href="#" class=${classMap({ item: true, on: this.page === i })} @click=${() => (this.page = i)}>
                <span class="glyph" aria-hidden="true">${icon}</span>${text}
              </a>
            `
          )}
        </nav>
        <section class="watch">
          <div class="caps tight">VEILLE ALTAHYR 24/7</div>
          <div class="ops"><span class="dot"></span>Centre opérationnel</div>
          <div class="phone">+33 1 70 00 00 00 · en direct</div>
        </section>
        <footer class="host">
          <svg class="hex" viewBox="0 0 17 30" aria-hidden="true"><path d="M0 15L4 8H13L17 15L13 22H4Z"></path></svg>
          <div>Hébergement souverain<br />France · SecNumCloud</div>
        </footer>
      </aside>

      <main class="main">
        <header class="top">
          <div class="crumb">
            <span class="strong">Vision entreprise</span> · Northwind Energy Group · Pilier 2 — Gestion des risques &amp; résilience organisationnelle (Risque humain &amp; devoir de vigilance)
            <span class="badge">PROTOTYPE v2</span>
          </div>
          <button class="resync"><span>⟳</span><span>Synchroniser</span></button>
          <div class="avatar">SR</div>
          <div class="who"><span class="name">S. Renaud</span><span>Group Security</span> <span>Director</span></div>
        </header>

        <div class="body">
          <section class="card feeds">
            ${SOURCES.map(
              (s) => html`
                <div class="feed">
                  <span class="letter">${s.letter}</span>
                  <div class="info">
                    <div class="title">${s.name}</div>
                    <div class="state"><span class="live">Connecté</span><span>${s.note}</span></div>
                  </div>
                </div>
              `
            )}
            <span class="last">Dernière synchronisation : 23 juin 2026, 08:00</span>
            <button class="now">⟳ Synchroniser maintenant</button>
          </section>

          <h1 class="h1">Carte en direct du risque humain</h1>
          <p class="lead">Vue en temps réel de l'empreinte de vos effectifs, du risque pays et des alertes actives. Cliquez sur un pays pour voir les localisations précises, sites de travail et zones refuges.</p>

          <section class="kpis">
            ${KPIS.map(
              (k) => html`
                <div class="card kpi">
                  <div class="label">${k.label}</div>
                  <div class="value ${k.tone}">${k.value}</div>
                  <div class=${classMap({ note: true, urgent: !!k.urgent })}>${k.note}</div>
                </div>
              `
            )}
          </section>

          <section class="split">
            <world-map></world-map>
            <aside class="card">
              <div class="head">
                <h2 class="h2">Sélectionnez un pays</h2>
                <p>Cliquez sur un pays de la carte pour voir le détail des localisations.</p>
              </div>
              <p class="empty">Aucun pays sélectionné. La carte affiche chaque pays où Northwind a des collaborateurs, coloré selon le niveau de risque actuel. Chaque marqueur indique l'effectif, la tendance du risque et le niveau d'alerte (1–5).</p>
            </aside>
          </section>
        </div>
      </main>
    `;
  }
}
